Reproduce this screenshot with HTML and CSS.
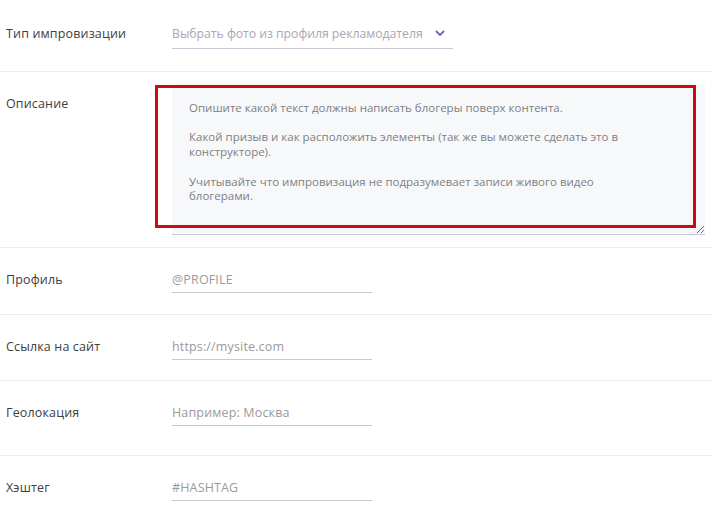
FILE: index.html
```html
<!DOCTYPE html>
<html lang="ru">
<head>
<meta charset="utf-8">
<title>Форма</title>
<link rel="stylesheet" href="styles.css">
</head>
<body>
<form class="form">
  <div class="row row-first">
    <div class="label">Тип импровизации</div>
    <div class="select">
      <span class="select-text">Выбрать фото из профиля рекламодателя</span>
      <svg class="chevron" width="10" height="7" viewBox="0 0 10 7"><path d="M1.5 1.5 L5 5 L8.5 1.5" fill="none" stroke="#7b68c6" stroke-width="2" stroke-linecap="round" stroke-linejoin="round"/></svg>
    </div>
  </div>
  <div class="row row-desc">
    <div class="label label-desc">Описание</div>
    <div class="area-wrap">
      <textarea class="area" placeholder="Опишите какой текст должны написать блогеры поверх контента.&#10;&#10;Какой призыв и как расположить элементы (так же вы можете сделать это в&#10;конструкторе).&#10;&#10;Учитывайте что импровизация не подразумевает записи живого видео&#10;блогерами."></textarea>
      <div class="highlight"></div>
    </div>
  </div>
  <div class="row">
    <div class="label">Профиль</div>
    <input class="field" type="text" placeholder="@PROFILE">
  </div>
  <div class="row row-short">
    <div class="label">Ссылка на сайт</div>
    <input class="field" type="text" placeholder="https://mysite.com">
  </div>
  <div class="row row-tall">
    <div class="label">Геолокация</div>
    <input class="field" type="text" placeholder="Например: Москва">
  </div>
  <div class="row">
    <div class="label">Хэштег</div>
    <input class="field" type="text" placeholder="#HASHTAG">
  </div>
</form>
</body>
</html>
```
FILE: styles.css
```css
* { box-sizing: border-box; }
html, body { margin: 0; background: #ffffff; }
body {
  font-family: "Open Sans", "Noto Sans", sans-serif;
  font-size: 12.5px;
  color: #454545;
  overflow: hidden;
}
.form { display: flex; flex-direction: column; }
.row {
  display: grid;
  grid-template-columns: 166px 1fr;
  align-items: start;
  padding: 23px 7px 21px 6px;
  border-bottom: 1px solid #ececec;
}
.row-first { padding-top: 25px; padding-bottom: 22px; }
.row-desc { padding-top: 12px; padding-bottom: 12px; }
.row-short { padding-bottom: 20px; }
.row-tall { padding-bottom: 29px; }
.label {
  line-height: 16px;
  padding-top: 1px;
  color: #404040;
  letter-spacing: 0.15px;
}
.label-desc { padding-top: 12px; }
.select {
  width: 281px;
  height: 24px;
  display: flex;
  align-items: flex-start;
  justify-content: space-between;
  padding-right: 8px;
  border-bottom: 1px solid #c9c7d6;
}
.select-text {
  color: #aaa6b2;
  font-size: 12.3px;
  line-height: 16px;
  padding-top: 1px;
  white-space: nowrap;
  letter-spacing: -0.05px;
}
.chevron { margin-top: 5px; flex: none; }
.field {
  width: 200px;
  height: 22px;
  padding: 0 0 4px 0;
  border: none;
  border-bottom: 1px solid #c9c7d6;
  background: transparent;
  font: inherit;
  color: #555;
  outline: none;
  letter-spacing: 0.15px;
}
.field::placeholder { color: #9a9a9a; }
.area-wrap { position: relative; }
.area {
  display: block;
  width: 100%;
  height: 151px;
  padding: 17px 17px 10px 17px;
  border: none;
  border-bottom: 1px solid #c9c7d6;
  background: #f7f8fa;
  font-family: inherit;
  font-size: 11.5px;
  line-height: 14.7px;
  color: #555;
  outline: none;
}
.area::placeholder { color: #808083; }
.highlight {
  position: absolute;
  left: -17px;
  top: 1px;
  width: 541px;
  height: 143px;
  border: 3px solid #cc0a14;
  pointer-events: none;
}
```
